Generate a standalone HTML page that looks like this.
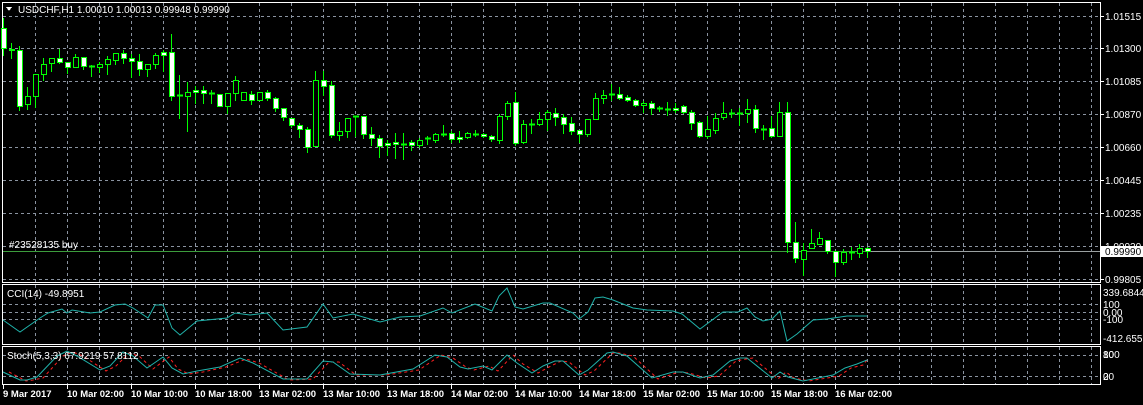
<!DOCTYPE html>
<html><head><meta charset="utf-8"><style>
html,body{margin:0;padding:0;background:#000;width:1143px;height:405px;overflow:hidden}
svg{display:block}
text{font-family:"Liberation Sans",sans-serif;font-size:10px;fill:#fff}
</style></head><body>
<svg id="s" width="1143" height="405" xmlns="http://www.w3.org/2000/svg" shape-rendering="crispEdges"></svg>
<script>
var s=document.getElementById('s'),h='';
function L(x1,y1,x2,y2,c,d,w){h+='<line x1="'+x1+'" y1="'+y1+'" x2="'+x2+'" y2="'+y2+'" stroke="'+c+'" stroke-width="'+(w||1)+'"'+(d?' stroke-dasharray="'+d+'"':'')+'/>';}
function T(x,y,t,a){h+='<text x="'+x+'" y="'+y+'"'+(a||'')+'>'+t+'</text>';}
var G='#8a93a0';
// grid verticals
for(var x=35.5;x<1100;x+=32){L(x,3,x,282,G,'3,3');L(x,285,x,344,G,'3,3');L(x,347,x,384,G,'3,3');}
var hy=[16,48,81,114,147,180,213,246,279];
hy.forEach(function(y){L(3,y+.5,1100,y+.5,G,'3,3');});
[304,312,319].forEach(function(y){L(3,y+.5,1100,y+.5,G,'3,3');});
[355,376].forEach(function(y){L(3,y+.5,1100,y+.5,G,'3,3');});
// frames
function R(x1,y1,x2,y2){h+='<rect x="'+x1+'.5" y="'+y1+'.5" width="'+(x2-x1)+'" height="'+(y2-y1)+'" fill="none" stroke="#fff"/>';}
R(2,2,1100,282);R(2,284,1100,344);R(2,346,1100,384);
// price line
L(3,251.5,1100,251.5,'#9aa0a0');L(3,251.5,870,251.5,'#3c9c3c');
// candles: [top,bot,wt,wb,type]
var c=[[28,48,18,55,'w'],[49,50,43,58,'w'],[50,106,46,110,'w'],[96,104,87,109,'b'],[74,96,74,107,'b'],[64,74,58,80,'b'],[58,63,58,71,'b'],[58,62,49,63,'w'],[62,67,62,73,'w'],[57,67,54,67,'b'],
[57,66,57,69,'w'],[66,67,65,76,'d'],[64,67,62,72,'b'],[59,64,56,74,'b'],[53,60,53,64,'b'],[53,58,50,63,'w'],[58,61,54,77,'w'],[61,69,54,75,'w'],[64,69,64,76,'b'],[55,64,53,68,'b'],
[52,55,50,71,'w'],[52,96,34,100,'w'],[95,96,75,118,'d'],[92,96,82,131,'b'],[90,92,86,103,'w'],[90,93,86,103,'w'],[93,94,90,103,'d'],[94,106,94,106,'w'],[93,106,93,113,'b'],[80,93,76,100,'b'],
[92,100,92,100,'b'],[94,100,91,104,'w'],[92,100,92,100,'b'],[92,98,90,100,'w'],[98,108,97,111,'w'],[108,117,108,120,'w'],[118,125,118,127,'w'],[125,129,123,137,'w'],[129,147,127,152,'w'],[80,146,71,146,'b'],
[80,86,71,95,'w'],[85,135,81,137,'w'],[131,135,122,140,'b'],[118,131,118,137,'b'],[116,118,116,136,'d'],[116,134,116,138,'w'],[134,138,127,145,'w'],[138,146,135,157,'w'],[143,145,140,155,'w'],[142,144,133,158,'w'],
[144,144,133,159,'d'],[142,145,140,150,'w'],[140,145,138,147,'b'],[138,138,136,144,'d'],[134,140,133,142,'b'],[134,134,125,136,'d'],[133,139,131,142,'w'],[137,139,131,142,'w'],[133,137,132,138,'b'],[134,134,130,136,'d'],
[134,136,133,137,'w'],[136,139,135,141,'w'],[116,140,114,143,'b'],[103,116,101,119,'b'],[102,143,92,145,'w'],[124,142,120,143,'b'],[124,124,119,133,'d'],[119,124,112,125,'b'],[112,119,110,130,'b'],[113,117,108,125,'w'],
[117,124,114,133,'w'],[123,131,117,134,'w'],[130,134,130,142,'w'],[119,134,119,136,'b'],[98,119,93,119,'b'],[95,98,90,103,'b'],[94,94,84,100,'d'],[94,98,87,99,'w'],[97,100,95,101,'w'],[100,105,99,106,'w'],
[103,105,101,112,'b'],[103,108,101,114,'w'],[108,108,106,111,'d'],[109,109,102,115,'d'],[108,110,103,112,'w'],[106,112,105,113,'w'],[112,123,110,129,'w'],[122,136,121,137,'w'],[129,136,116,138,'b'],[118,130,113,133,'b'],
[113,117,102,119,'b'],[113,113,109,117,'d'],[113,113,108,125,'d'],[109,113,99,122,'b'],[109,128,105,132,'w'],[129,129,125,139,'d'],[128,136,116,137,'w'],[112,136,102,136,'b'],[112,242,102,252,'w'],[242,258,222,262,'w'],
[250,259,243,275,'b'],[243,248,229,248,'b'],[238,244,232,244,'b'],[240,251,240,253,'w'],[251,262,251,276,'w'],[252,262,249,264,'b'],[252,252,247,259,'d'],[248,253,244,257,'b'],[248,251,247,257,'w']];
c.forEach(function(k,i){var x=3+8*i;L(x+.5,k[2],x+.5,k[3]+1,'#00ff00');
 if(k[4]=='d'){L(x-2,k[0]+.5,x+4,k[0]+.5,'#00ff00',0,2);}
 else h+='<rect x="'+(x-2)+'.5" y="'+k[0]+'.5" width="5" height="'+Math.max(1,k[1]-k[0])+'" fill="'+(k[4]=='w'?'#fff':'#000')+'" stroke="#00ff00"/>';});
// CCI
var cci=[[3,320],[20,332],[40,318],[48,313],[62,309],[67,313],[72,310],[90,313],[100,312],[115,305],[125,304],[133,308],[148,318],[155,305],[163,305],[172,328],[180,335],[197,321],[227,318],[235,313],[250,315],[267,313],[283,330],[307,327],[323,304],[333,318],[353,314],[380,322],[400,317],[420,316],[443,308],[452,313],[475,304],[492,311],[499,296],[507,288],[515,307],[523,309],[543,303],[550,303],[573,313],[579,319],[588,312],[595,298],[603,297],[613,300],[633,308],[647,310],[673,311],[682,314],[700,329],[723,312],[738,312],[747,308],[755,317],[763,321],[772,319],[780,311],[787,341],[797,334],[813,320],[827,319],[847,316],[867,316]];
function P(a,c,d){h+='<polyline fill="none" stroke="'+c+'" shape-rendering="auto" '+(d?'stroke-dasharray="'+d+'" ':'')+'points="'+a.map(function(p){return p.join(',')}).join(' ')+'"/>';}
P(cci,'#20b2aa');
var st=[[3,372],[20,380],[27,380],[37,377],[57,356],[67,351],[77,356],[100,370],[110,366],[123,352],[133,356],[147,368],[163,357],[172,368],[183,374],[197,371],[220,367],[240,358],[253,363],[283,379],[307,379],[323,361],[333,362],[350,374],[380,375],[413,369],[435,355],[447,357],[460,367],[468,369],[483,366],[492,370],[507,355],[517,363],[532,373],[543,366],[555,361],[563,361],[579,375],[588,370],[607,353],[613,352],[627,356],[652,378],[673,372],[683,372],[700,378],[713,375],[730,361],[740,358],[747,358],[772,378],[780,372],[788,377],[803,381],[833,375],[845,368],[857,364],[867,360]];
var sg=st.map(function(p,i){var x=p[0]+6;if(x>867)x=867;return [x,p[1]+ (i%2?1:0)];});
P(sg,'#ff2020','3,3');P(st,'#20b2aa');
// text
h+='<path d="M6 7 L12 7 L9 11 Z" fill="#fff"/>';
T(18,13,'USDCHF,H1  1.00010 1.00013 0.99948 0.99990');
T(9,248,'#23528135 buy');
T(7,297,'CCI(14) -49.8951');T(7,359,'Stoch(5,3,3) 67.9219 57.8112');
var pl=['1.01515','1.01300','1.01085','1.00870','1.00660','1.00445','1.00235','1.00020','0.99805'];
pl.forEach(function(t,i){var y=hy[i];L(1100,y+.5,1104,y+.5,'#fff');T(1105,y+4,t);});
h+='<rect x="1101" y="246" width="42" height="11" fill="#fff"/>';
h+='<text x="1105" y="255" style="fill:#000">0.99990</text>';
T(1103,296,'339.6844');T(1103,308,'100');T(1103,316,'0.00');T(1103,323,'-100');T(1103,342,'-412.6559');
T(1103,358,'100');T(1103,358,'80');T(1103,380,'20');T(1103,380,'0');
var dl=['9 Mar 2017','10 Mar 02:00','10 Mar 10:00','10 Mar 18:00','13 Mar 02:00','13 Mar 10:00','13 Mar 18:00','14 Mar 02:00','14 Mar 10:00','14 Mar 18:00','15 Mar 02:00','15 Mar 10:00','15 Mar 18:00','16 Mar 02:00'];
dl.forEach(function(t,i){var x=3+64*i;L(x+.5,385,x+.5,389,'#fff');T(x+(i?0:0),397,t,' style="font-weight:bold;font-size:9.5px"');});
s.innerHTML=h;
</script>
</body></html>
